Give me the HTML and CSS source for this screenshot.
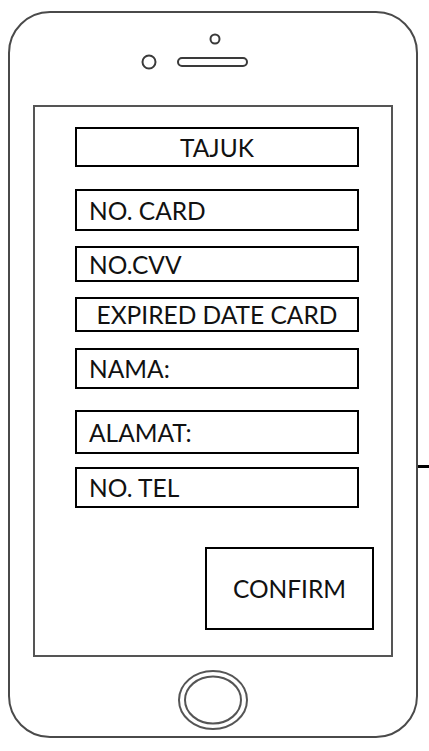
FILE: index.html
```html
<!DOCTYPE html>
<html>
<head>
<meta charset="utf-8">
<link rel="stylesheet" href="styles.css">
</head>
<body>
<div class="phone">
  <svg class="top" width="406" height="92" viewBox="0 0 406 92">
    <circle cx="205" cy="26" r="4.5" fill="none" stroke="#3a3a3a" stroke-width="2"/>
    <circle cx="139" cy="49" r="6.5" fill="none" stroke="#3a3a3a" stroke-width="2"/>
    <rect x="168" y="45" width="69" height="8" rx="4" fill="none" stroke="#3a3a3a" stroke-width="2"/>
  </svg>
  <div class="screen">
    <div class="field centered f-title">TAJUK</div>
    <div class="field f-card">NO. CARD</div>
    <div class="field f-cvv">NO.CVV</div>
    <div class="field centered f-exp">EXPIRED DATE CARD</div>
    <div class="field f-nama">NAMA:</div>
    <div class="field f-alamat">ALAMAT:</div>
    <div class="field f-tel">NO. TEL</div>
    <div class="actions">
      <div class="confirm">CONFIRM</div>
    </div>
  </div>
  <svg class="bottom" width="406" height="79" viewBox="0 0 406 79">
    <ellipse cx="203" cy="43" rx="34" ry="29" fill="none" stroke="#555" stroke-width="2"/>
    <ellipse cx="203" cy="43" rx="28" ry="23.5" fill="none" stroke="#555" stroke-width="2"/>
  </svg>
</div>
<div class="tick"></div>
</body>
</html>
```

FILE: styles.css
```css
html, body {
  margin: 0;
  padding: 0;
  background: #fff;
}
body {
  width: 429px;
  height: 751px;
  position: relative;
  overflow: hidden;
  font-family: "Lato", "Liberation Sans", sans-serif;
  color: #111;
}
.phone {
  box-sizing: border-box;
  margin: 11px 0 0 8px;
  width: 410px;
  height: 727px;
  border: 2px solid #4a4a4a;
  border-radius: 42px;
  display: flex;
  flex-direction: column;
}
.top, .bottom {
  display: block;
  flex: none;
}
.screen {
  box-sizing: border-box;
  margin-left: 23px;
  width: 360px;
  height: 552px;
  border: 2px solid #555;
  padding: 20px 0 0 40px;
  display: flex;
  flex-direction: column;
  flex: none;
}
.field {
  box-sizing: border-box;
  width: 284px;
  border: 2px solid #000;
  display: flex;
  align-items: center;
  padding: 2px 0 0 12px;
  font-size: 24.5px;
  line-height: 1;
  white-space: nowrap;
}
.centered {
  justify-content: center;
  padding-left: 0;
}
.f-title { height: 40px; }
.f-card { height: 42px; margin-top: 22px; }
.f-cvv { height: 36px; margin-top: 15px; }
.f-exp { height: 35px; margin-top: 15px; }
.f-nama { height: 41px; margin-top: 16px; }
.f-alamat { height: 44px; margin-top: 21px; }
.f-tel { height: 41px; margin-top: 13px; }
.actions {
  display: flex;
  justify-content: flex-end;
  padding-right: 17px;
  margin-top: 39px;
}
.confirm {
  box-sizing: border-box;
  width: 169px;
  height: 83px;
  border: 2px solid #000;
  display: flex;
  align-items: center;
  justify-content: center;
  padding-top: 2px;
  font-size: 24.5px;
  line-height: 1;
}
.tick {
  position: absolute;
  left: 418px;
  top: 465px;
  width: 11px;
  height: 3px;
  background: #000;
}
```
